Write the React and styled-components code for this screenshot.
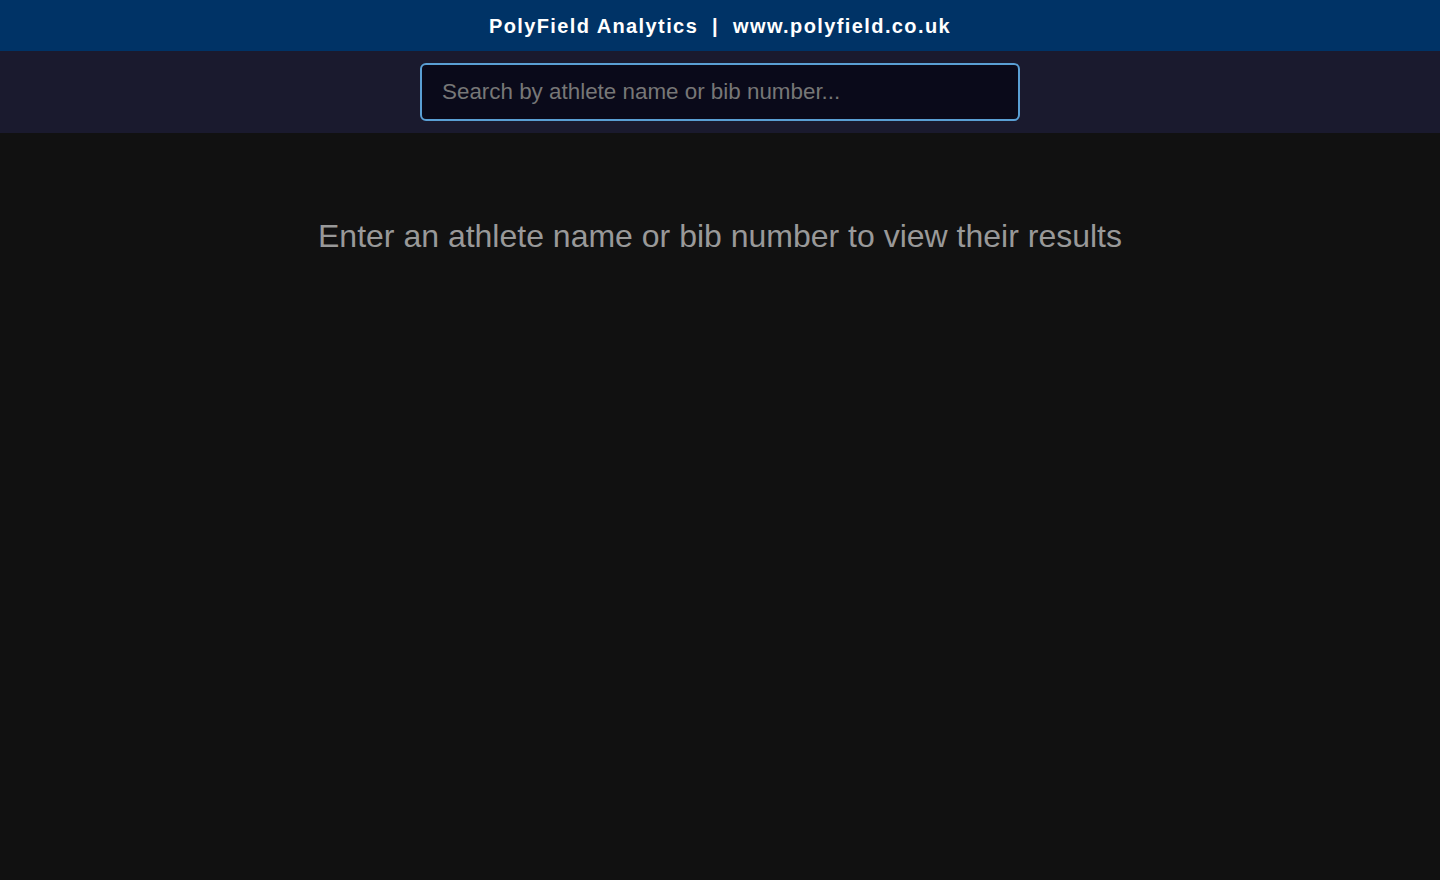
import React, { useState } from "react";
import styled, { createGlobalStyle } from "styled-components";

const GlobalStyle = createGlobalStyle`
  html, body {
    margin: 0;
    padding: 0;
    background: #111111;
    font-family: "Liberation Sans", Arial, sans-serif;
  }
`;

const Page = styled.div`
  min-height: 880px;
  background: #111111;
  display: flex;
  flex-direction: column;
`;

const Banner = styled.header`
  box-sizing: border-box;
  background: #003366;
  height: 51px;
  padding-top: 2px;
  display: flex;
  align-items: center;
  justify-content: center;
`;

const BannerText = styled.h1`
  margin: 0;
  color: #ffffff;
  font-size: 20px;
  font-weight: bold;
  letter-spacing: 1.4px;
  white-space: pre;
`;

const SearchBar = styled.div`
  background: #1a1a2e;
  height: 82px;
  display: flex;
  align-items: center;
  justify-content: center;
`;

const SearchInput = styled.input`
  box-sizing: border-box;
  width: 600px;
  height: 58px;
  padding: 0 20px;
  background: #0a0a1a;
  border: 2px solid #5a9fd4;
  border-radius: 6px;
  color: #ffffff;
  font-family: "Liberation Sans", Arial, sans-serif;
  font-size: 22.4px;
  outline: none;

  &::placeholder {
    color: #777777;
  }
`;

const Content = styled.main`
  padding-top: 85px;
  text-align: center;
`;

const Message = styled.p`
  margin: 0;
  color: #999999;
  font-size: 32px;
`;

export default function App() {
  const [query, setQuery] = useState("");

  return (
    <Page>
      <GlobalStyle />
      <Banner>
        <BannerText>{"PolyField Analytics  |  www.polyfield.co.uk"}</BannerText>
      </Banner>
      <SearchBar>
        <SearchInput
          autoFocus
          value={query}
          onChange={(e) => setQuery(e.target.value)}
          placeholder="Search by athlete name or bib number..."
        />
      </SearchBar>
      <Content>
        <Message>Enter an athlete name or bib number to view their results</Message>
      </Content>
    </Page>
  );
}
